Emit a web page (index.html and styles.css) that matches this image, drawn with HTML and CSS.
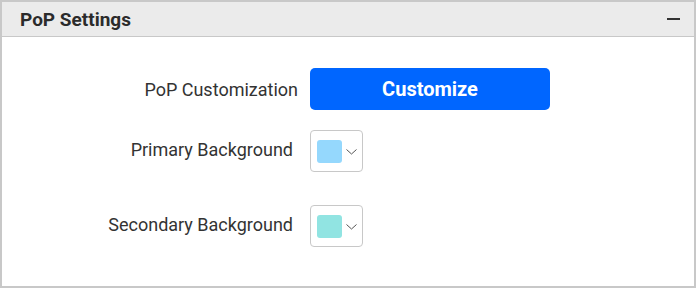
FILE: index.html
```html
<!DOCTYPE html>
<html lang="en">
<head>
  <meta charset="UTF-8">
  <meta name="viewport" content="width=device-width, initial-scale=1.0">
  <title>PoP Settings</title>
  <link rel="stylesheet" href="styles.css">
</head>
<body>
  <div class="panel">
    <div class="panel-header">
      <span class="panel-title">PoP Settings</span>
      <span class="collapse-btn"></span>
    </div>
    <div class="panel-body">
      <div class="row row-button">
        <label class="row-label">PoP Customization</label>
        <button class="customize-btn">Customize</button>
      </div>
      <div class="row row-picker">
        <label class="row-label">Primary Background</label>
        <div class="color-picker">
          <span class="swatch swatch-primary"></span>
          <svg class="chevron" width="11" height="6" viewBox="0 0 11 6">
            <path d="M0.5 0.5 L5.5 5 L10.5 0.5" fill="none" stroke="#555" stroke-width="1"/>
          </svg>
        </div>
      </div>
      <div class="row row-picker row-last">
        <label class="row-label">Secondary Background</label>
        <div class="color-picker">
          <span class="swatch swatch-secondary"></span>
          <svg class="chevron" width="11" height="6" viewBox="0 0 11 6">
            <path d="M0.5 0.5 L5.5 5 L10.5 0.5" fill="none" stroke="#555" stroke-width="1"/>
          </svg>
        </div>
      </div>
    </div>
  </div>
</body>
</html>
```

FILE: styles.css
```css
* {
  box-sizing: border-box;
}

body {
  margin: 0;
  font-family: Roboto, "Liberation Sans", Arial, sans-serif;
  color: #333;
  background: #fff;
}

.panel {
  width: 696px;
  height: 288px;
  border: 2px solid #c8c8c8;
  background: #fff;
}

.panel-header {
  height: 35px;
  background: #ebebeb;
  border-bottom: 1px solid #c8c8c8;
  display: flex;
  align-items: center;
  justify-content: space-between;
  padding: 0 14px 0 18px;
}

.panel-title {
  font-size: 19px;
  font-weight: 700;
  color: #2b2b2b;
}

.collapse-btn {
  width: 13px;
  height: 2px;
  background: #333;
}

.panel-body {
  padding-top: 31px;
}

.row {
  display: flex;
  align-items: center;
}

.row-label {
  width: 296px;
  text-align: right;
  font-size: 18px;
  color: #333;
}

.row-button {
  gap: 12px;
}

.row-picker {
  gap: 17px;
  margin-top: 20px;
}

.row-picker .row-label {
  width: 291px;
  margin-top: -3px;
}

.row-last {
  margin-top: 33px;
}

.customize-btn {
  width: 240px;
  height: 42px;
  border: none;
  border-radius: 5px;
  background: #0066ff;
  color: #fff;
  font-family: Roboto, "Liberation Sans", Arial, sans-serif;
  font-size: 20px;
  font-weight: 700;
  cursor: pointer;
}

.color-picker {
  width: 53px;
  height: 42px;
  border: 1px solid #c8c8c8;
  border-radius: 4px;
  display: flex;
  align-items: center;
  padding-left: 6px;
  gap: 4px;
}

.swatch {
  width: 25px;
  height: 23px;
  border-radius: 3px;
}

.swatch-primary {
  background: #95d8fd;
}

.swatch-secondary {
  background: #91e4e2;
}

.chevron {
  margin-top: 2px;
}
```
